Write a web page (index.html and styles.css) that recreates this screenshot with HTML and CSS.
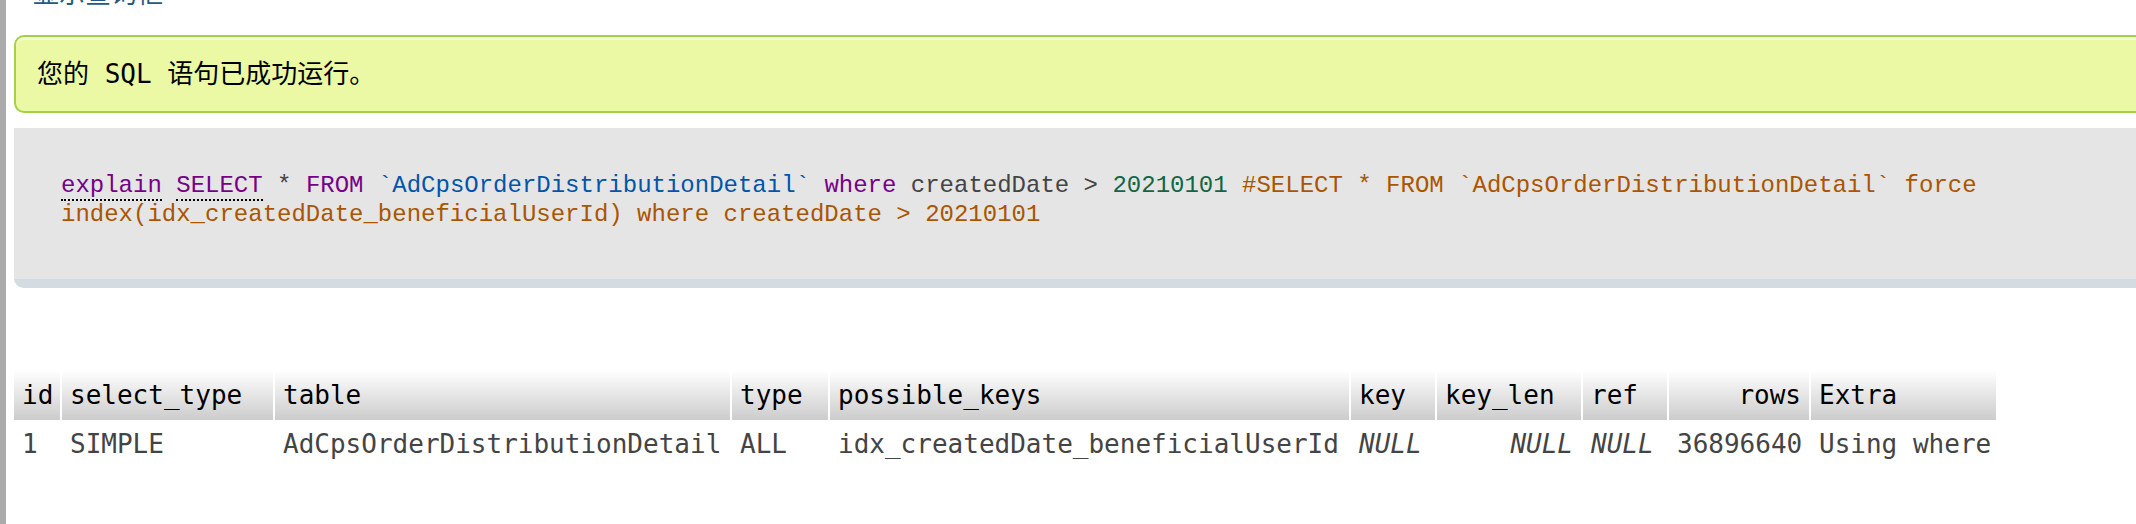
FILE: index.html
```html
<!DOCTYPE html>
<html lang="zh-CN">
<head>
<meta charset="utf-8">
<title>SQL</title>
<link rel="stylesheet" href="styles.css">
</head>
<body>
<div class="frame">
  <div class="resizer"></div>
  <main class="content">
    <div class="query-toggle"><a href="#">显示查询框</a></div>
    <div class="success">您的 SQL 语句已成功运行。</div>
    <div class="sql-outer">
      <div class="sql-code"><code><span class="kw doc">explain</span> <span class="kw doc">SELECT</span> * <span class="kw">FROM</span> <span class="ident">`AdCpsOrderDistributionDetail`</span> <span class="kw">where</span> createdDate &gt; <span class="num">20210101</span> <span class="comment">#SELECT * FROM `AdCpsOrderDistributionDetail` force index(idx_createdDate_beneficialUserId) where createdDate &gt; 20210101</span></code></div>
      <div class="tools"></div>
    </div>
    <table class="results">
      <thead>
        <tr>
          <th class="w-id">id</th>
          <th class="w-select">select_type</th>
          <th class="w-table">table</th>
          <th class="w-type">type</th>
          <th class="w-pkeys">possible_keys</th>
          <th class="w-key">key</th>
          <th class="w-keylen">key_len</th>
          <th class="w-ref">ref</th>
          <th class="w-rows num-col">rows</th>
          <th class="w-extra">Extra</th>
        </tr>
      </thead>
      <tbody>
        <tr>
          <td>1</td>
          <td>SIMPLE</td>
          <td>AdCpsOrderDistributionDetail</td>
          <td>ALL</td>
          <td>idx_createdDate_beneficialUserId</td>
          <td class="null">NULL</td>
          <td class="null num-col">NULL</td>
          <td class="null">NULL</td>
          <td class="num-col">36896640</td>
          <td>Using where</td>
        </tr>
      </tbody>
    </table>
  </main>
</div>
</body>
</html>
```
FILE: styles.css
```css
html, body {
  margin: 0;
  height: 100%;
  background: #fff;
  overflow: hidden;
}

.frame {
  display: flex;
  height: 100%;
}

.resizer {
  flex: none;
  width: 6px;
  background: #ababab;
}

.content {
  flex: 1;
  min-width: 0;
  overflow: hidden;
  padding-left: 8px;
}

.query-toggle {
  margin-top: -23px;
  height: 30px;
  font: 26px/30px "Noto Sans CJK SC", sans-serif;
}

.query-toggle a {
  color: #235a81;
  text-decoration: none;
  margin-left: 19px;
}

.success {
  margin-top: 28px;
  width: calc(100% + 40px);
  box-sizing: border-box;
  height: 78px;
  border: 2px solid #a4d04a;
  border-radius: 10px;
  background: #ebf8a4;
  box-shadow: inset 0 3px 0 rgba(255, 255, 255, 0.45);
  padding: 0 21px;
  font: 26px/74px "DejaVu Sans Mono", "Noto Sans CJK SC", monospace;
  color: #000;
  white-space: nowrap;
}

.sql-outer {
  margin-top: 15px;
  width: calc(100% + 40px);
  background: #e5e5e5;
  border-radius: 0 0 0 10px;
  overflow: hidden;
}

.sql-code {
  padding: 44px 0 50px 47px;
  font: 24px/28.6px "Liberation Mono", "DejaVu Sans Mono", monospace;
  color: #444;
}

.sql-code code {
  font: inherit;
}

.kw { color: #770088; }
.ident { color: #0055aa; }
.num { color: #116644; }
.comment { color: #aa5500; }

.doc {
  border-bottom: 2px dotted #000;
}

.tools {
  height: 9px;
  background: #d3dce3;
}

.results {
  margin-top: 82px;
  border-collapse: separate;
  border-spacing: 0;
  table-layout: fixed;
  width: 1982px;
  font: 26px "DejaVu Sans Mono", monospace;
}

.results th,
.results td {
  padding: 0 8px;
  text-align: left;
  white-space: nowrap;
  overflow: hidden;
}

.results th + th,
.results td + td {
  border-left: 2px solid #fff;
}

.results th {
  height: 50px;
  font-weight: normal;
  color: #000;
  background: linear-gradient(#ffffff, #cccccc);
}

.results td {
  height: 48px;
  color: #444;
}

.results .num-col { text-align: right; }
.results .null { font-style: italic; }

.w-id { width: 30px; }
.w-select { width: 195px; }
.w-table { width: 439px; }
.w-type { width: 80px; }
.w-pkeys { width: 503px; }
.w-key { width: 68px; }
.w-keylen { width: 128px; }
.w-ref { width: 68px; }
.w-rows { width: 124px; }
.w-extra { width: 169px; }
```
